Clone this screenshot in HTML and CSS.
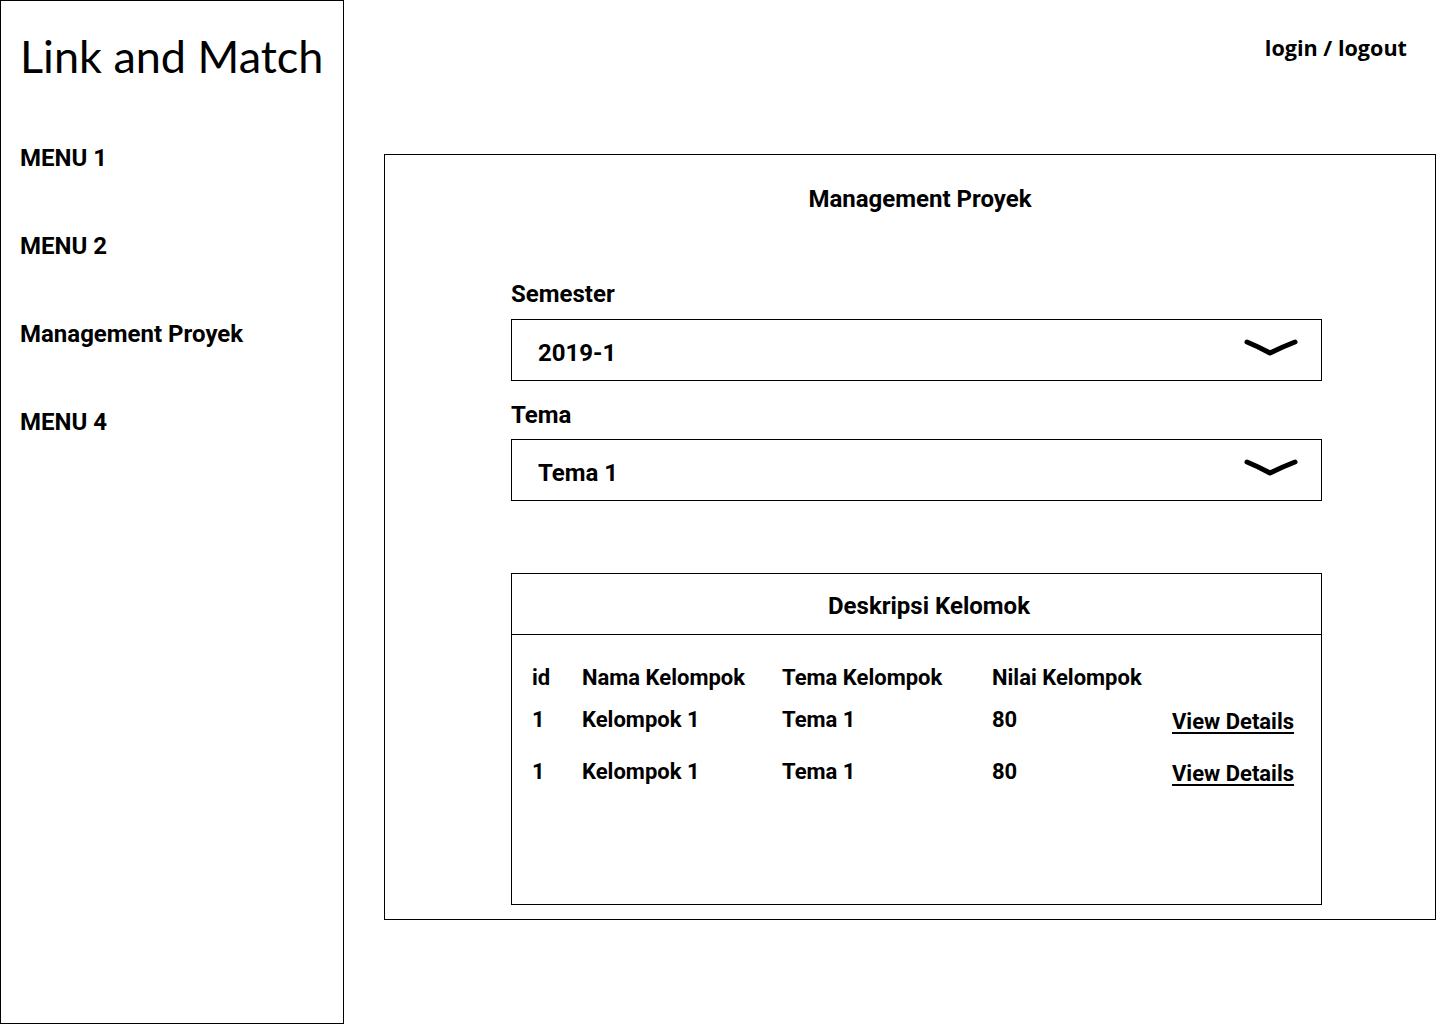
FILE: index.html
```html
<!DOCTYPE html>
<html lang="id">
<head>
<meta charset="utf-8">
<title>Link and Match</title>
<link rel="stylesheet" href="styles.css">
</head>
<body>
<div class="page">
  <aside class="sidebar">
    <div class="brand">Link and Match</div>
    <nav class="menu">
      <div class="menu-item">MENU 1</div>
      <div class="menu-item">MENU 2</div>
      <div class="menu-item">Management Proyek</div>
      <div class="menu-item">MENU 4</div>
    </nav>
  </aside>
  <main class="main">
    <div class="topbar"><span class="auth">login / logout</span></div>
    <section class="panel">
      <h1 class="panel-title">Management Proyek</h1>
      <div class="form">
        <div class="label">Semester</div>
        <div class="select">
          <span class="select-value">2019-1</span>
          <svg class="chev" width="56" height="20" viewBox="0 0 56 20"><path d="M4 5 Q16 10 27 16 Q39 10 52 5" fill="none" stroke="#000" stroke-width="5" stroke-linecap="round" stroke-linejoin="round"/></svg>
        </div>
        <div class="label label-2">Tema</div>
        <div class="select">
          <span class="select-value">Tema 1</span>
          <svg class="chev" width="56" height="20" viewBox="0 0 56 20"><path d="M4 5 Q16 10 27 16 Q39 10 52 5" fill="none" stroke="#000" stroke-width="5" stroke-linecap="round" stroke-linejoin="round"/></svg>
        </div>
        <div class="table-box">
          <div class="table-head">Deskripsi Kelomok</div>
          <div class="table-body">
            <div class="row row-head">
              <span>id</span><span>Nama Kelompok</span><span>Tema Kelompok</span><span>Nilai Kelompok</span><span></span>
            </div>
            <div class="row row-1">
              <span>1</span><span>Kelompok 1</span><span>Tema 1</span><span>80</span><a class="link" href="#">View Details</a>
            </div>
            <div class="row row-2">
              <span>1</span><span>Kelompok 1</span><span>Tema 1</span><span>80</span><a class="link" href="#">View Details</a>
            </div>
          </div>
        </div>
      </div>
    </section>
  </main>
</div>
</body>
</html>
```
FILE: styles.css
```css
* { box-sizing: border-box; }
html, body { margin: 0; padding: 0; background: #fff; }
body {
  font-family: Roboto, "Liberation Sans", sans-serif;
  color: #000;
  width: 1440px;
  height: 1024px;
  overflow: hidden;
}
.page { display: flex; width: 1440px; height: 1024px; }

.sidebar {
  width: 344px;
  height: 1024px;
  border: 1px solid #000;
  padding: 27px 0 0 19px;
  flex: none;
}
.brand {
  font-family: Lato, "Open Sans", sans-serif;
  font-weight: 400;
  font-size: 45px;
  line-height: 56px;
}
.menu { margin-top: 60px; display: flex; flex-direction: column; gap: 60px; }
.menu-item { font-size: 24px; font-weight: 700; line-height: 28px; }

.main { flex: 1; display: flex; flex-direction: column; padding: 0 4px 0 40px; }
.topbar { display: flex; justify-content: flex-end; height: 154px; padding: 33px 29px 0 0; }
.auth {
  font-family: "Open Sans", sans-serif;
  font-weight: 700;
  font-size: 21.6px;
  line-height: 30px;
}

.panel {
  width: 1052px;
  height: 766px;
  border: 1px solid #000;
  padding: 30px 113px 0 126px;
}
.panel-title {
  margin: 0;
  font-size: 24px;
  font-weight: 700;
  line-height: 28px;
  text-align: center;
  padding-left: 7px;
}
.form { margin-top: 67px; }
.label { font-size: 24px; font-weight: 700; line-height: 28px; margin-bottom: 11px; }
.label-2 { margin-top: 20px; margin-bottom: 10px; }
.select {
  height: 62px;
  border: 1px solid #000;
  display: flex;
  align-items: center;
  justify-content: space-between;
  padding: 6px 22px 0 26px;
}
.select-value { font-size: 24px; font-weight: 700; line-height: 28px; }
.chev { margin-top: -12px; }

.table-box {
  margin-top: 72px;
  height: 332px;
  border: 1px solid #000;
}
.table-head {
  height: 61px;
  border-bottom: 1px solid #000;
  font-size: 24px;
  font-weight: 700;
  line-height: 28px;
  text-align: center;
  padding: 18px 0 0 25px;
}
.table-body { padding: 30px 0 0 20px; }
.row {
  display: grid;
  grid-template-columns: 50px 200px 210px 180px auto;
  font-size: 22px;
  font-weight: 700;
  line-height: 26px;
}
.row-1 { margin-top: 16px; }
.row-2 { margin-top: 26px; }
.link { color: #000; text-decoration: underline; text-underline-offset: 3px; position: relative; top: 2px; }
```
